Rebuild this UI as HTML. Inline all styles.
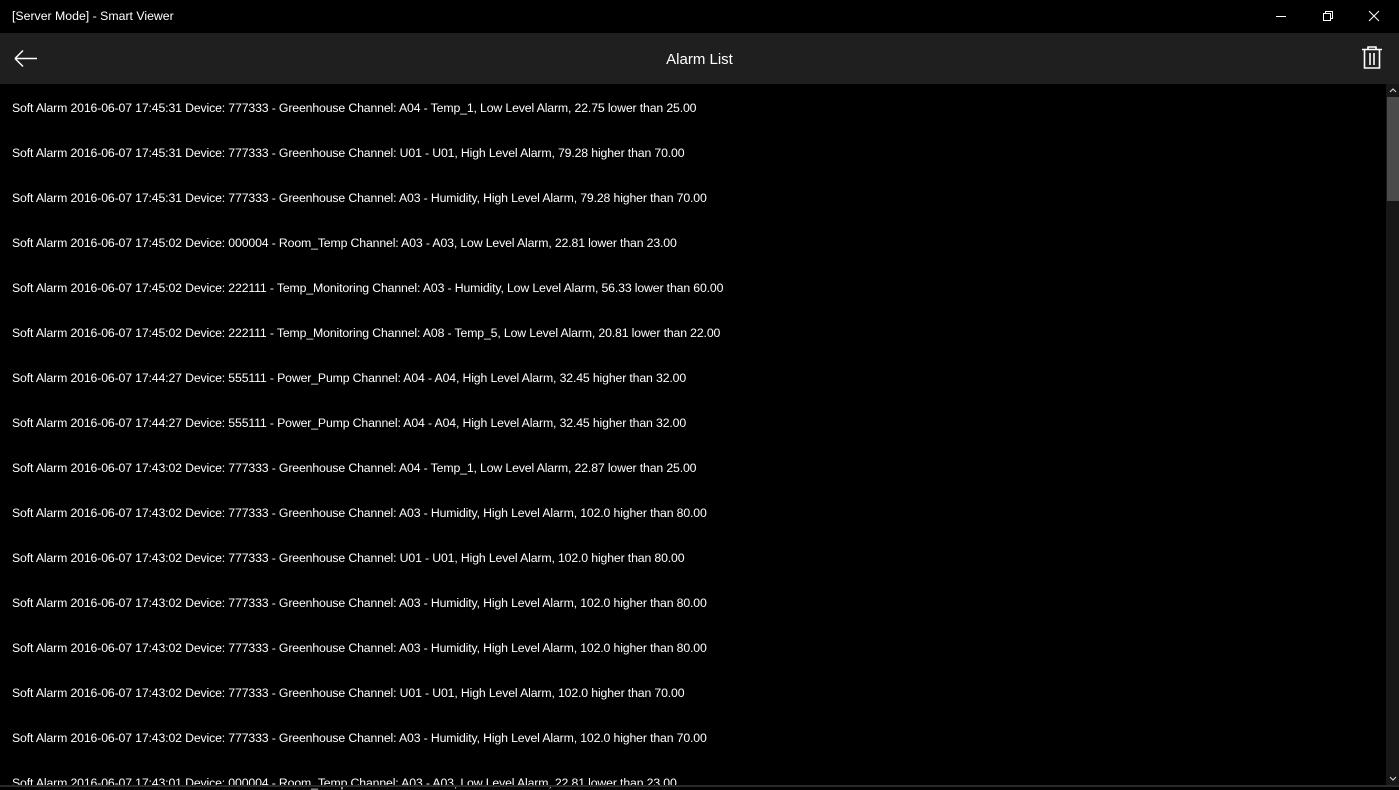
<!DOCTYPE html>
<html><head><style>
body{margin:0;width:1399px;height:787px;background:#000;overflow:hidden;font-family:"Liberation Sans",sans-serif;color:#fff;position:relative}
.title{position:absolute;left:12px;top:9px;font-size:12.3px}
.hdr{position:absolute;left:0;top:33px;width:1399px;height:51px;background:#1f1f1f}
.hdr .t{position:absolute;left:0;width:1399px;text-align:center;top:18px;font-size:15px}
.row{position:absolute;left:12px;font-size:12.3px;white-space:nowrap;letter-spacing:-0.15px}
.sb{position:absolute;left:1386px;top:84px;width:13px;height:703px;background:#171717}
.th{position:absolute;left:1387px;top:97px;width:12px;height:104px;background:#4a4a4a}
.bot{position:absolute;left:0;top:785px;width:1399px;height:2px;background:#2a2a2a}
</style></head><body>
<div class="title">[Server Mode] - Smart Viewer</div>
<svg style="position:absolute;left:1270px;top:6px" width="120" height="20" fill="none" stroke="#fff" stroke-width="1">
<line x1="6" y1="10.5" x2="16" y2="10.5"/>
<rect x="53.5" y="7.5" width="7" height="7"/><path d="M55.5 7.5V5.5H62.5V12.5H60.5"/>
<path d="M99 5L109 15M109 5L99 15"/>
</svg>
<div class="hdr"><div class="t">Alarm List</div>
<svg style="position:absolute;left:12px;top:14px" width="28" height="24" fill="none" stroke="#fff" stroke-width="1.5"><path d="M3 11.5H25M3 11.5L11 3.5M3 11.5L11 19.5"/></svg>
<svg style="position:absolute;left:1360px;top:12px" width="26" height="26" fill="none" stroke="#fff" stroke-width="1.6"><path d="M2 4.5H22M8 4.5V2H16V4.5M4.5 4.5V23H19.5V4.5M10 8V20M14 8V20"/></svg>
</div>
<div class="row" style="top:101px">Soft Alarm 2016-06-07 17:45:31 Device: 777333 - Greenhouse Channel: A04 - Temp_1, Low Level Alarm, 22.75 lower than 25.00</div>
<div class="row" style="top:146px">Soft Alarm 2016-06-07 17:45:31 Device: 777333 - Greenhouse Channel: U01 - U01, High Level Alarm, 79.28 higher than 70.00</div>
<div class="row" style="top:191px">Soft Alarm 2016-06-07 17:45:31 Device: 777333 - Greenhouse Channel: A03 - Humidity, High Level Alarm, 79.28 higher than 70.00</div>
<div class="row" style="top:236px">Soft Alarm 2016-06-07 17:45:02 Device: 000004 - Room_Temp Channel: A03 - A03, Low Level Alarm, 22.81 lower than 23.00</div>
<div class="row" style="top:281px">Soft Alarm 2016-06-07 17:45:02 Device: 222111 - Temp_Monitoring Channel: A03 - Humidity, Low Level Alarm, 56.33 lower than 60.00</div>
<div class="row" style="top:326px">Soft Alarm 2016-06-07 17:45:02 Device: 222111 - Temp_Monitoring Channel: A08 - Temp_5, Low Level Alarm, 20.81 lower than 22.00</div>
<div class="row" style="top:371px">Soft Alarm 2016-06-07 17:44:27 Device: 555111 - Power_Pump Channel: A04 - A04, High Level Alarm, 32.45 higher than 32.00</div>
<div class="row" style="top:416px">Soft Alarm 2016-06-07 17:44:27 Device: 555111 - Power_Pump Channel: A04 - A04, High Level Alarm, 32.45 higher than 32.00</div>
<div class="row" style="top:461px">Soft Alarm 2016-06-07 17:43:02 Device: 777333 - Greenhouse Channel: A04 - Temp_1, Low Level Alarm, 22.87 lower than 25.00</div>
<div class="row" style="top:506px">Soft Alarm 2016-06-07 17:43:02 Device: 777333 - Greenhouse Channel: A03 - Humidity, High Level Alarm, 102.0 higher than 80.00</div>
<div class="row" style="top:551px">Soft Alarm 2016-06-07 17:43:02 Device: 777333 - Greenhouse Channel: U01 - U01, High Level Alarm, 102.0 higher than 80.00</div>
<div class="row" style="top:596px">Soft Alarm 2016-06-07 17:43:02 Device: 777333 - Greenhouse Channel: A03 - Humidity, High Level Alarm, 102.0 higher than 80.00</div>
<div class="row" style="top:641px">Soft Alarm 2016-06-07 17:43:02 Device: 777333 - Greenhouse Channel: A03 - Humidity, High Level Alarm, 102.0 higher than 80.00</div>
<div class="row" style="top:686px">Soft Alarm 2016-06-07 17:43:02 Device: 777333 - Greenhouse Channel: U01 - U01, High Level Alarm, 102.0 higher than 70.00</div>
<div class="row" style="top:731px">Soft Alarm 2016-06-07 17:43:02 Device: 777333 - Greenhouse Channel: A03 - Humidity, High Level Alarm, 102.0 higher than 70.00</div>
<div class="row" style="top:776px">Soft Alarm 2016-06-07 17:43:01 Device: 000004 - Room_Temp Channel: A03 - A03, Low Level Alarm, 22.81 lower than 23.00</div>
<div class="sb"></div><div class="th"></div>
<svg style="position:absolute;left:1387px;top:86px" width="12" height="8" fill="none" stroke="#ccc" stroke-width="1.2"><path d="M3 6L6 3L9 6"/></svg>
<svg style="position:absolute;left:1387px;top:775px" width="12" height="8" fill="none" stroke="#ccc" stroke-width="1.2"><path d="M3 2L6 5L9 2"/></svg>
<div class="bot"></div>
</body></html>
